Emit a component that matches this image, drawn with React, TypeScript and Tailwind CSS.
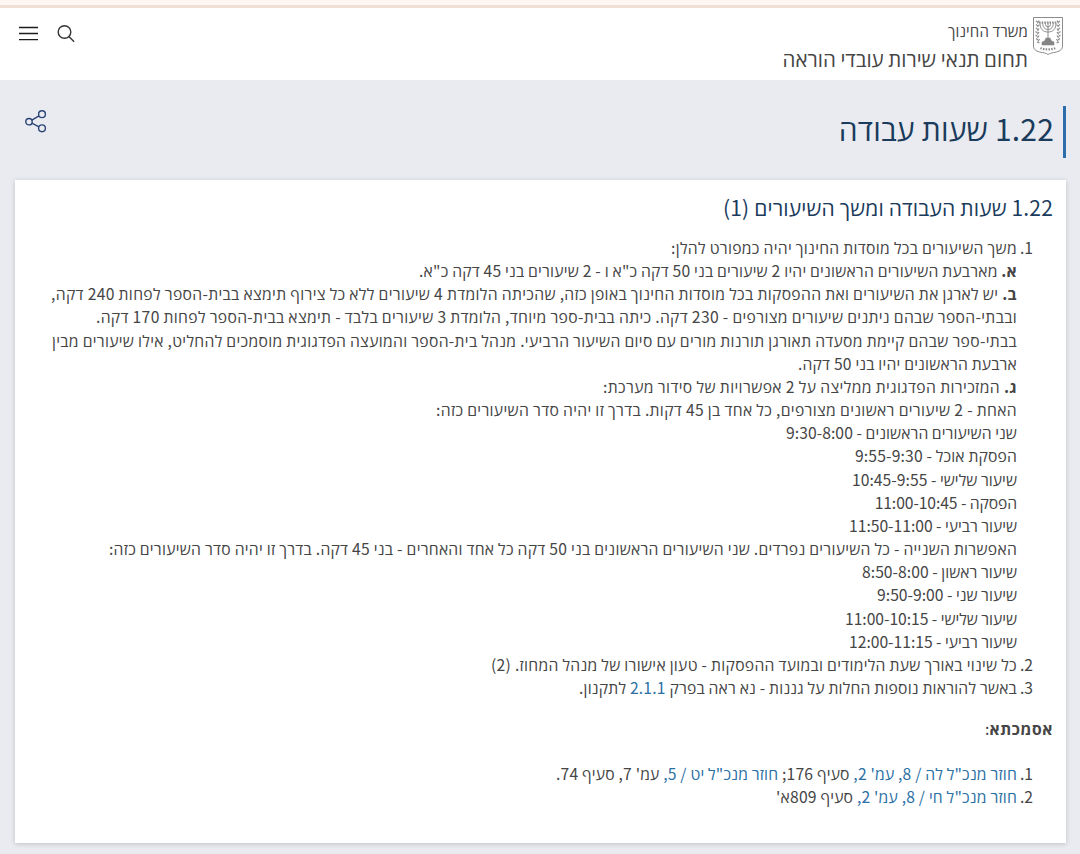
import type { ReactNode } from 'react'

type Row = {
  text: ReactNode
  track?: string
}

const Ref = ({ children }: { children: ReactNode }) => (
  <a href="#" className="text-[#2b70a4]">{children}</a>
)

const lessons: Row[] = [
  { track: 'tracking-[0.299px]', text: 'משך השיעורים בכל מוסדות החינוך יהיה כמפורט להלן:' },
  { track: 'tracking-[0.196px]', text: <><b>א.</b> מארבעת השיעורים הראשונים יהיו 2 שיעורים בני 50 דקה כ"א ו - 2 שיעורים בני 45 דקה כ"א.</> },
  { track: 'tracking-[0.321px]', text: <><b>ב.</b> יש לארגן את השיעורים ואת ההפסקות בכל מוסדות החינוך באופן כזה, שהכיתה הלומדת 4 שיעורים ללא כל צירוף תימצא בבית-הספר לפחות 240 דקה,</> },
  { track: 'tracking-[0.321px]', text: 'ובבתי-הספר שבהם ניתנים שיעורים מצורפים - 230 דקה. כיתה בבית-ספר מיוחד, הלומדת 3 שיעורים בלבד - תימצא בבית-הספר לפחות 170 דקה.' },
  { track: 'tracking-[0.299px]', text: 'בבתי-ספר שבהם קיימת מסעדה תאורגן תורנות מורים עם סיום השיעור הרביעי. מנהל בית-הספר והמועצה הפדגוגית מוסמכים להחליט, אילו שיעורים מבין' },
  { track: 'tracking-[0.183px]', text: 'ארבעת הראשונים יהיו בני 50 דקה.' },
  { track: 'tracking-[0.371px]', text: <><b>ג.</b> המזכירות הפדגוגית ממליצה על 2 אפשרויות של סידור מערכת:</> },
  { track: 'tracking-[0.331px]', text: 'האחת - 2 שיעורים ראשונים מצורפים, כל אחד בן 45 דקות. בדרך זו יהיה סדר השיעורים כזה:' },
  { track: 'tracking-[0.056px]', text: 'שני השיעורים הראשונים - 9:30-8:00' },
  { track: 'tracking-[0.152px]', text: 'הפסקת אוכל - 9:55-9:30' },
  { track: 'tracking-[0.027px]', text: 'שיעור שלישי - 10:45-9:55' },
  { track: 'tracking-[-0.09px]', text: 'הפסקה - 11:00-10:45' },
  { track: 'tracking-[-0.022px]', text: 'שיעור רביעי - 11:50-11:00' },
  { track: 'tracking-[0.264px]', text: 'האפשרות השנייה - כל השיעורים נפרדים. שני השיעורים הראשונים בני 50 דקה כל אחד והאחרים - בני 45 דקה. בדרך זו יהיה סדר השיעורים כזה:' },
  { track: 'tracking-[0.029px]', text: 'שיעור ראשון - 8:50-8:00' },
  { text: 'שיעור שני - 9:50-9:00' },
  { track: 'tracking-[-0.042px]', text: 'שיעור שלישי - 11:00-10:15' },
  { track: 'tracking-[-0.022px]', text: 'שיעור רביעי - 12:00-11:15' },
]

const changes: Row[] = [
  { track: 'tracking-[0.283px]', text: 'כל שינוי באורך שעת הלימודים ובמועד ההפסקות - טעון אישורו של מנהל המחוז. (2)' },
]

const kindergarten: Row[] = [
  { track: 'tracking-[0.186px]', text: <>באשר להוראות נוספות החלות על גננות - נא ראה בפרק <Ref>2.1.1</Ref> לתקנון.</> },
]

const sources: Row[][] = [
  [{ track: 'tracking-[0.181px]', text: <><Ref>חוזר מנכ"ל לה / 8, עמ' 2,</Ref> סעיף 176; <Ref>חוזר מנכ"ל יט / 5,</Ref> עמ' 7, סעיף 74.</> }],
  [{ track: 'tracking-[0.192px]', text: <><Ref>חוזר מנכ"ל חי / 8, עמ' 2,</Ref> סעיף 809א'</> }],
]

function Emblem() {
  return (
    <svg width="30" height="38" viewBox="0 0 30 38" fill="none" stroke="#8c8c8c">
      <path d="M.5.5h29v28.500c0 3-2 5-6 6-4 .8-6.500 1-8.500 2.500-2-1.500-4.500-1.700-8.500-2.500-4-1-6-3-6-6z" strokeWidth="1" />
      {/* Menorah */}
      <path d="M7 6c0 6 3 9 8 9s8-3 8-9M9.700 6c0 4 2 6.500 5.300 6.500s5.300-2.500 5.300-6.500M12.400 6c0 2.500 1 4 2.600 4s2.600-1.500 2.600-4M15 5v16" strokeWidth="1" />
      <path d="M6 5.500h18" strokeWidth="1.800" strokeDasharray="1.600 1" />
      <path d="M13 21h4l1.500 3 2.500 1v3H9v-3l2.500-1z" fill="#858585" strokeWidth=".6" />
      {/* Olive branches */}
      <path d="M3 4l2 1.500M3 7.500l2 1.500M3 11l2 1.500M2.500 14.500l2 1.500M2.500 18l2 1.500M3 21.500l2 1.500M4 25l2.500 1M6 3.500l-1.500 3M6.500 7.500L4.500 10M6 11.500l-1.500 2.500M6 15l-1.500 2.500M6 18.500L4.500 21M6.500 22L5 24.500" strokeWidth="1.100" />
      <path d="M27 4l-2 1.500M27 7.500L25 9M27 11l-2 1.500M27.500 14.500l-2 1.500M27.500 18l-2 1.500M27 21.500L25 23M26 25l-2.500 1M24 3.500l1.500 3M23.500 7.500l2 2.500M24 11.500l1.500 2.500M24 15l1.500 2.500M24 18.500l1.500 2.500M23.500 22l1.500 2.500" strokeWidth="1.100" />
      <path d="M7.500 31c3 1.800 12 1.800 15 0" strokeWidth="2.200" strokeDasharray="1.500 1.200" />
    </svg>
  )
}

function MenuIcon() {
  return (
    <svg width="19" height="15" viewBox="0 0 19 15" stroke="#1c1c1c" strokeWidth="1.300">
      <path d="M0 1.500h19M0 7.500h19M0 13.700h19" />
    </svg>
  )
}

function SearchIcon() {
  return (
    <svg width="18" height="18" viewBox="0 0 18 18" fill="none" stroke="#333" strokeWidth="1.400">
      <circle cx="7.500" cy="7" r="6.300" />
      <path d="M11.900 11.500l5.200 5.200" />
    </svg>
  )
}

function ShareIcon() {
  return (
    <svg width="22" height="23" viewBox="0 0 22 23" fill="none" stroke="#2c4476" strokeWidth="1.400">
      <circle cx="4" cy="11.700" r="3.200" />
      <circle cx="17" cy="4.200" r="3.400" />
      <circle cx="17" cy="18.300" r="3.400" />
      <path d="M6.800 10.200l7.200-4.300M6.800 13.200l7.200 3.600" />
    </svg>
  )
}

function Item({ n, rows }: { n: number; rows: Row[] }) {
  return (
    <li className="flex">
      <span className="w-4 shrink-0">{n}.</span>
      <div>
        {rows.map((row, i) => (
          <p key={i} className={`whitespace-nowrap ${row.track ?? ''}`}>{row.text}</p>
        ))}
      </div>
    </li>
  )
}

export default function App() {
  return (
    <div dir="rtl" className="h-[854px] overflow-hidden bg-[#e9ebf0] font-['Noto_Sans_CJK_JP','Open_Sans',sans-serif] text-[#454545]">
      <div className="h-2 border-b-[3px] border-[#efdfd5] bg-[#fff6f3]" />

      {/* Header */}
      <header className="flex h-[72px] items-start justify-between bg-white pr-[17px] pl-[19px]">
        <div className="flex">
          <div className="pt-[9px]"><Emblem /></div>
          <div className="mr-[5px] whitespace-nowrap">
            <p className="mt-[11px] text-[15px] leading-6 tracking-[0.14px]">משרד החינוך</p>
            <p className="mt-px text-[20.5px] leading-7">תחום תנאי שירות עובדי הוראה</p>
          </div>
        </div>
        <div className="flex flex-row-reverse gap-[19px] pt-[17px]">
          <div className="pt-px"><MenuIcon /></div>
          <SearchIcon />
        </div>
      </header>

      {/* Page title */}
      <div className="flex h-[100px] items-start justify-between pt-[26px] pr-[14px] pl-[25px]">
        <h1 className="h-[52px] border-r-[3px] border-[#2e6da9] pr-[9px] text-[30px] leading-[45px] tracking-[0.2px] text-[#1a3b5c]">
          1.22 שעות עבודה
        </h1>
        <div className="pt-1"><ShareIcon /></div>
      </div>

      <main className="mr-[14px] ml-[15px] h-[663px] bg-white pt-[13px] pr-[13px] shadow-[0_1px_5px_rgba(0,0,0,0.18)]">
        <h2 className="text-[21px] leading-7 tracking-[0.156px] text-[#1a3b5c]">1.22 שעות העבודה ומשך השיעורים (1)</h2>
        <div className="text-[15.7px] leading-[23.16px]">
          <ol className="mt-[15px] pr-5">
            <Item n={1} rows={lessons} />
            <Item n={2} rows={changes} />
            <Item n={3} rows={kindergarten} />
          </ol>
          <p className="mt-[18px]"><b className="tracking-[0.6px]">אסמכתא</b>:</p>
          <ol className="mt-[22px] pr-5">
            {sources.map((rows, i) => (
              <Item key={i} n={i + 1} rows={rows} />
            ))}
          </ol>
        </div>
      </main>
    </div>
  )
}
